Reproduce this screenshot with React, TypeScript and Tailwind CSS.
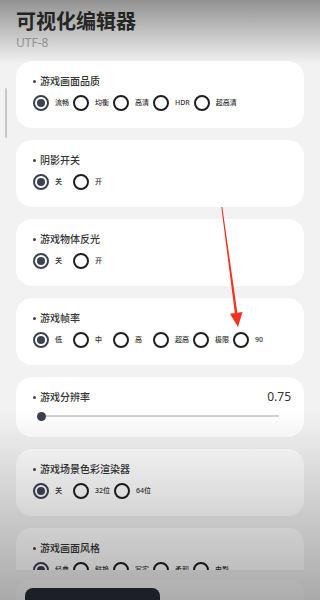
import React from 'react';

type Group = {
  title: string;
  options: string[];
};

const groups: Group[] = [
  { title: '游戏画面品质', options: ['流畅', '均衡', '高清', 'HDR', '超高清'] },
  { title: '阴影开关', options: ['关', '开'] },
  { title: '游戏物体反光', options: ['关', '开'] },
  { title: '游戏帧率', options: ['低', '中', '高', '超高', '极限', '90'] },
];

const groupsAfter: Group[] = [
  { title: '游戏场景色彩渲染器', options: ['关', '32位', '64位'] },
  { title: '游戏画面风格', options: ['经典', '鲜艳', '写实', '柔和', '电影'] },
];

const font = { fontFamily: '"Noto Sans", "Noto Sans CJK SC", sans-serif' };

const Radio = ({ checked }: { checked: boolean }) => (
  <span
    className={`flex h-[16px] w-[16px] shrink-0 items-center justify-center rounded-full border-2 ${
      checked ? 'border-[#3d4150]' : 'border-[#1f1f1f]'
    }`}
  >
    {checked && <span className="h-[8px] w-[8px] rounded-full bg-[#3d4150]" />}
  </span>
);

const Label = ({ text }: { text: string }) => (
  <div className="flex h-[14px] items-center gap-[4px] text-[10px] font-medium leading-[14px] text-[#333]">
    <span className="h-[3px] w-[3px] rounded-full bg-[#444]" />
    <span>{text}</span>
  </div>
);

const RadioCard = ({ group }: { group: Group }) => (
  <div className="rounded-[16px] bg-white px-[17px] pt-[13px] pb-[17px]">
    <Label text={group.title} />
    <div className="mt-[7px] flex items-center gap-[4px]">
      {group.options.map((opt, i) => (
        <div key={opt} className="flex items-center gap-[6px]">
          <Radio checked={i === 0} />
          <span className="min-w-[14px] text-[7px] font-medium leading-[10px] text-[#333]">{opt}</span>
        </div>
      ))}
    </div>
  </div>
);

const SliderCard = () => (
  <div className="rounded-[16px] bg-white px-[17px] pt-[13px] pb-[16px]">
    <div className="flex h-[14px] items-center justify-between">
      <Label text="游戏分辨率" />
      <span className="-mr-[4px] text-[12px] text-[#333]">0.75</span>
    </div>
    <div className="relative mt-[7px] ml-[8px] mr-[8px] flex h-[10px] items-center">
      <div className="h-[2px] w-full rounded-full bg-[#d2d2d2]" />
      <span className="absolute left-[-4px] top-[0.5px] h-[9px] w-[9px] rounded-full bg-[#3b3f4e]" />
    </div>
  </div>
);

export default function App() {
  return (
    <div className="relative flex h-[600px] w-[320px] flex-col overflow-hidden bg-[#f2f2f2]" style={font}>
      <div className="h-[55px] shrink-0 px-4 pt-[8px]">
        <h1 className="text-[20px] font-bold leading-[28px] text-[#333]">可视化编辑器</h1>
        <div className="text-[12px] leading-[14px] text-[#a8a8a8]">UTF-8</div>
      </div>

      <div className="relative flex-1 overflow-hidden">
        <div className="absolute left-[5px] top-[33px] h-[50px] w-[2px] rounded-full bg-[#c8c8c8]" />
        <div className="flex flex-col gap-[12px] px-4 pt-[6px]">
          {groups.map((g) => (
            <RadioCard key={g.title} group={g} />
          ))}
          <SliderCard />
          {groupsAfter.map((g) => (
            <RadioCard key={g.title} group={g} />
          ))}
        </div>
      </div>

      <div className="h-[30px] shrink-0 px-4 pt-[10px]">
        <div className="h-full rounded-t-[14px] bg-white/40 px-[9px] pt-[8px]">
          <div className="h-[20px] w-[135px] rounded-t-[8px] bg-[#272b35]" />
        </div>
      </div>

      {/* vignette from the capture */}
      <div className="pointer-events-none absolute inset-x-0 top-0 h-[64px] bg-linear-to-b from-black/40 to-transparent" />
      <div className="pointer-events-none absolute inset-x-0 bottom-0 h-[190px] bg-linear-to-b from-transparent to-black/30" />

      {/* red annotation arrow */}
      <svg className="pointer-events-none absolute left-0 top-0" width="320" height="600" viewBox="0 0 320 600">
        <polygon points="221.3,207 222.3,207 237.5,314 235,314.3" fill="#f2321f" />
        <polygon points="238,327 242.5,312 230,313.8" fill="#f2321f" />
      </svg>
    </div>
  );
}
